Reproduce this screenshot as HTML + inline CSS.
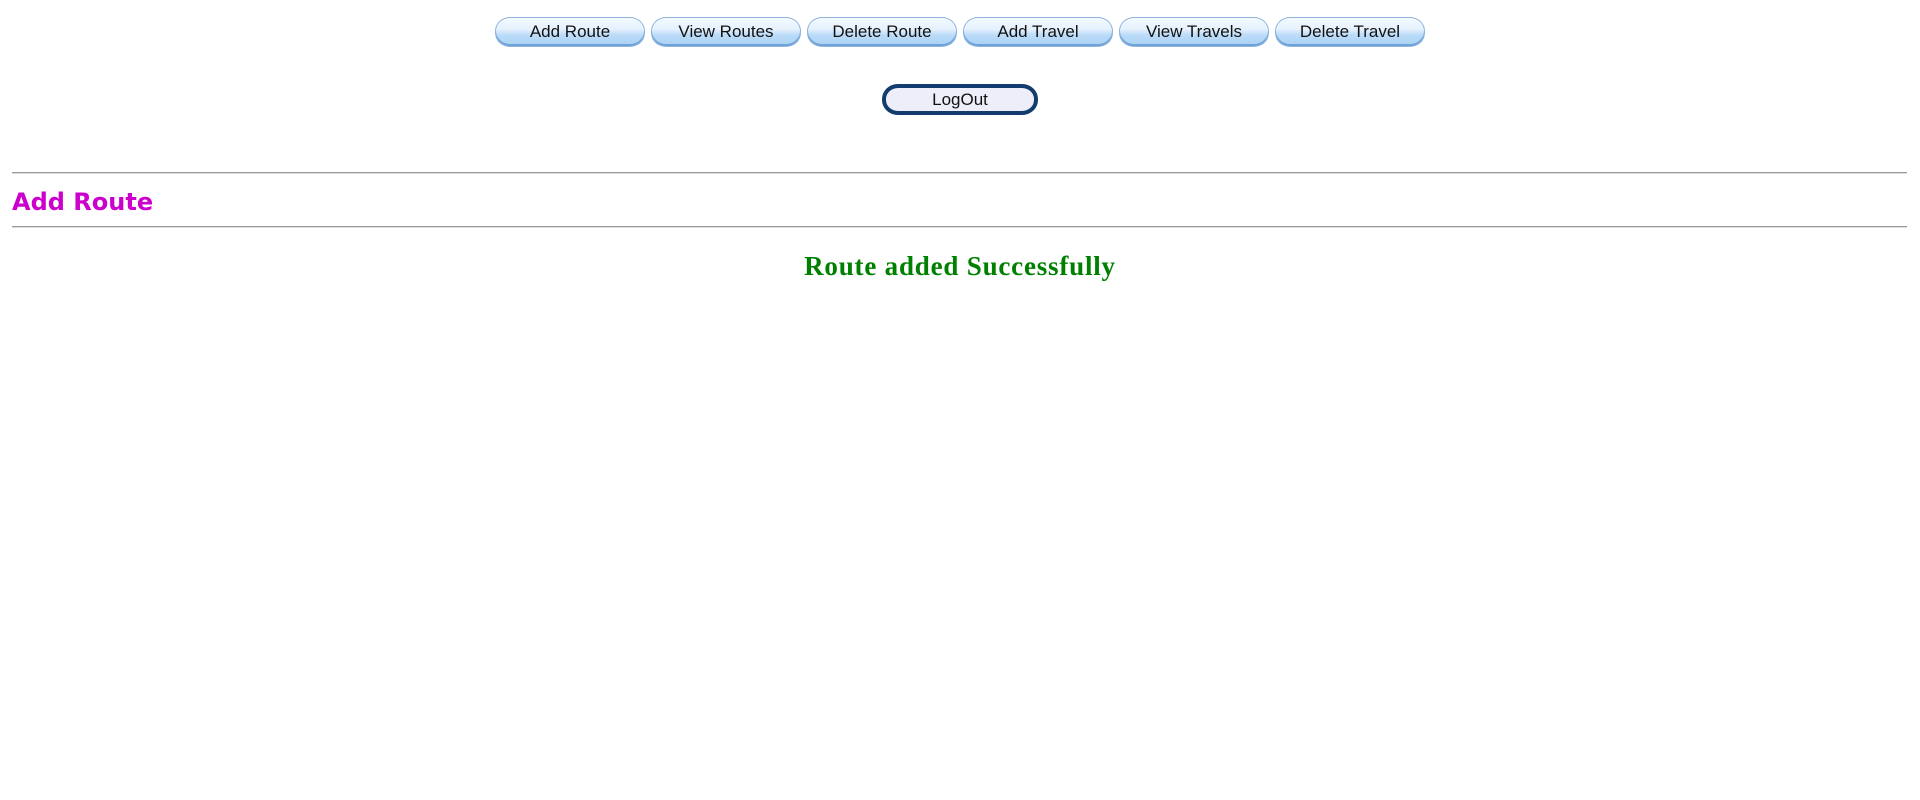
<!DOCTYPE html>
<html><head><style>
body{margin:0;background:#fff;width:1920px;height:800px;position:relative;font-family:"Liberation Sans",sans-serif;overflow:hidden}
.btn{position:absolute;top:17px;width:150px;height:30px;border-radius:15px/14px;box-sizing:border-box;border:1px solid #8fb4dd;
background:linear-gradient(#f4f9ff 0%,#e6f1fd 40%,#bcdcf8 60%,#a9d0f5 100%);font-size:17px;color:#111;text-align:center;line-height:28px;box-shadow:inset 0 -2px 0 #6fa3d8}
.logout{position:absolute;left:882px;top:84px;width:156px;height:31px;box-sizing:border-box;border:4px solid #123c6e;border-radius:16px/15px;background:#eeeefa;text-align:center;font-size:17px;line-height:23px;color:#111}
.hr{position:absolute;left:12px;width:1895px;height:0;border-top:1px solid #999;border-bottom:1px solid #ddd}
h2{position:absolute;left:12px;top:188px;margin:0;font-family:"DejaVu Sans","Liberation Sans",sans-serif;font-weight:bold;font-size:24px;color:#cc00cc}
.msg{position:absolute;left:0;width:1920px;top:251px;text-align:center;font-family:"Liberation Serif",serif;font-weight:bold;font-size:27px;letter-spacing:0.8px;color:#008000}
</style></head><body>
<div class="btn" style="left:495px">Add Route</div>
<div class="btn" style="left:651px">View Routes</div>
<div class="btn" style="left:807px">Delete Route</div>
<div class="btn" style="left:963px">Add Travel</div>
<div class="btn" style="left:1119px">View Travels</div>
<div class="btn" style="left:1275px">Delete Travel</div>
<div class="logout">LogOut</div>
<div class="hr" style="top:172px"></div>
<h2>Add Route</h2>
<div class="hr" style="top:226px"></div>
<div class="msg">Route added Successfully</div>
</body></html>
